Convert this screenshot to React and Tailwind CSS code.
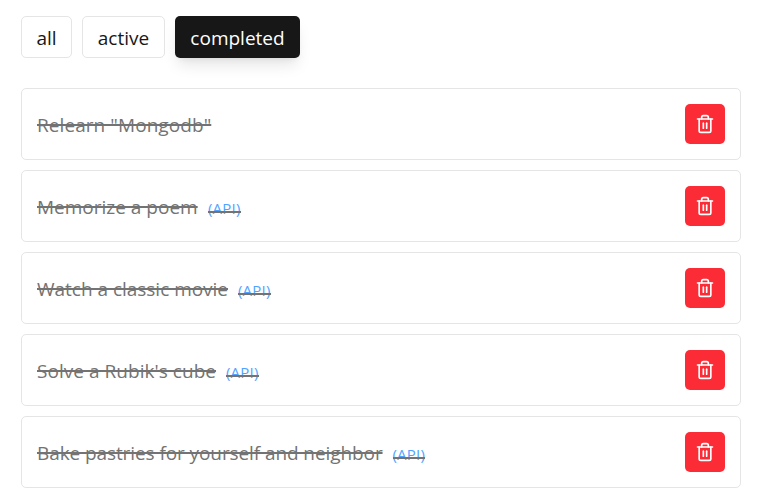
import { Trash2 } from "lucide-react";

const todos = [
  { title: 'Relearn "Mongodb"', style: "w-[174.5px] tracking-[0.07px]" },
  { title: "Memorize a poem", style: "w-[161px]", api: true },
  { title: "Watch a classic movie", style: "w-[191px] tracking-[-0.02px]", api: true },
  { title: "Solve a Rubik's cube", style: "w-[179px] tracking-[0.04px]", api: true },
  { title: "Bake pastries for yourself and neighbor", style: "w-[345.5px] tracking-[-0.09px]", api: true },
];

const tabs = [
  { label: "all", style: "w-[51px] border border-neutral-200 text-neutral-900" },
  { label: "active", style: "w-[83px] border border-neutral-200 text-neutral-900" },
  { label: "completed", style: "w-[125px] bg-neutral-900 text-white shadow-lg" },
];

export default function App() {
  return (
    <main className="h-[496px] overflow-hidden bg-white pt-4 pr-[17px] pl-[21px] font-['Open_Sans','Noto_Sans',sans-serif] text-[19px]">
      <nav className="mb-[30px] flex gap-2.5">
        {tabs.map((tab) => (
          <button key={tab.label} className={`flex h-[42px] items-center justify-center rounded-[5px] pt-0.5 ${tab.style}`}>
            <span>{tab.label}</span>
          </button>
        ))}
      </nav>
      <ul className="flex flex-col gap-2.5">
        {todos.map((todo) => (
          <li key={todo.title} className="flex h-[72px] items-center justify-between rounded-[5px] border border-neutral-200 px-[15px]">
            <p className="flex items-baseline gap-2.5 pt-0.5 whitespace-nowrap text-neutral-500">
              <span className={`line-through decoration-2 ${todo.style}`}>{todo.title}</span>
              {todo.api && (
                <span className="relative text-[15px] tracking-[0.2px] text-blue-400 after:absolute after:inset-x-0 after:bottom-1.5 after:h-0.5 after:bg-neutral-500">(API)</span>
              )}
            </p>
            <button className="flex size-10 items-center justify-center rounded-[5px] bg-red-500 text-white">
              <Trash2 size={20} />
            </button>
          </li>
        ))}
      </ul>
    </main>
  );
}
